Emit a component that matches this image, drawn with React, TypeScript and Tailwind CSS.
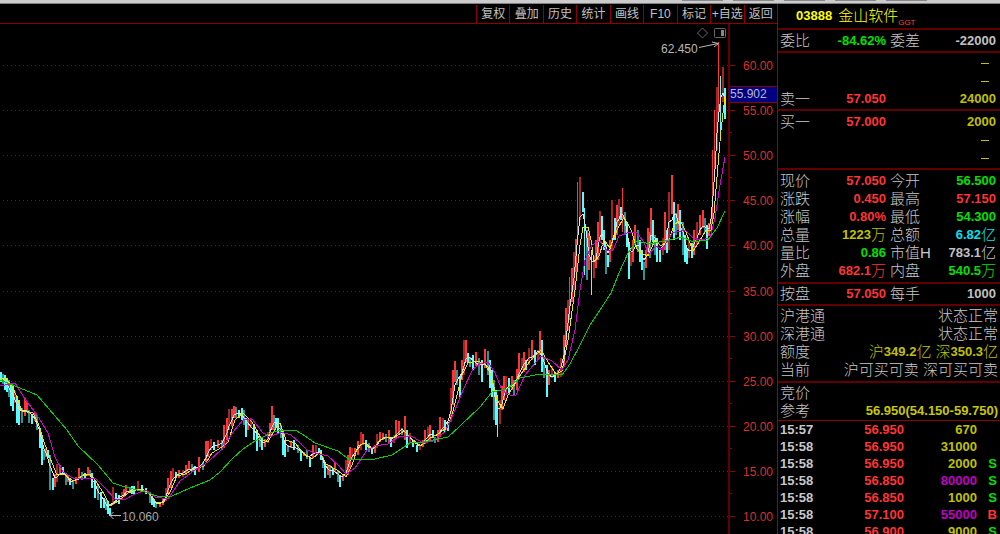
import type { ReactNode } from "react";

const CJK = "font-['Liberation_Sans','Noto_Sans_CJK_SC',sans-serif]";

const tools = ["复权", "叠加", "历史", "统计", "画线", "F10", "标记", "+自选", "返回"];

const RED = "text-[#ff3434]";
const GREEN = "text-[#00e000]";
const YELLOW = "text-[#c0c000]";
const CYAN = "text-[#00e0f0]";
const GRAY = "text-[#c0c0c0]";
const PURPLE = "text-[#c000c0]";

type Quote = { label: string; value: string; unit?: string; color: string };

const quotes: Quote[] = [
  { label: "现价", value: "57.050", color: RED },
  { label: "今开", value: "56.500", color: GREEN },
  { label: "涨跌", value: "0.450", color: RED },
  { label: "最高", value: "57.150", color: RED },
  { label: "涨幅", value: "0.80%", color: RED },
  { label: "最低", value: "54.300", color: GREEN },
  { label: "总量", value: "1223", unit: "万", color: YELLOW },
  { label: "总额", value: "6.82", unit: "亿", color: CYAN },
  { label: "量比", value: "0.86", color: GREEN },
  { label: "市值H", value: "783.1", unit: "亿", color: GRAY },
  { label: "外盘", value: "682.1", unit: "万", color: RED },
  { label: "内盘", value: "540.5", unit: "万", color: GREEN },
];

const trades = [
  { time: "15:57", price: "56.950", volume: "670", side: "" },
  { time: "15:58", price: "56.950", volume: "31000", side: "" },
  { time: "15:58", price: "56.950", volume: "2000", side: "S" },
  { time: "15:58", price: "56.850", volume: "80000", side: "S", big: true },
  { time: "15:58", price: "56.850", volume: "1000", side: "S" },
  { time: "15:58", price: "57.100", volume: "55000", side: "B", big: true },
  { time: "15:58", price: "56.900", volume: "9000", side: "S" },
];

// x, high, low in chart units
const bars: [number, number, number][] = [
  [1, 372, 382], [3, 374, 384], [5, 375, 390], [7, 378, 392], [9, 380, 397], [11, 383, 406], [13, 386, 411], [15, 391, 403],
  [17, 396, 423], [19, 400, 425], [22, 408, 423], [25, 398, 416], [27, 402, 411], [29, 410, 423], [32, 414, 424], [35, 412, 421],
  [37, 415, 430], [40, 428, 448], [42, 435, 465], [44, 450, 460], [46, 448, 457], [48, 450, 458], [50, 455, 490], [53, 478, 490],
  [55, 474, 487], [57, 464, 482], [60, 465, 474], [63, 467, 475], [66, 473, 485], [68, 475, 482], [70, 478, 485], [73, 480, 489],
  [76, 477, 484], [79, 468, 478], [82, 472, 480], [85, 473, 479], [88, 467, 476], [90, 470, 476], [92, 473, 488], [95, 480, 498],
  [98, 485, 500], [101, 492, 508], [104, 498, 508], [106, 499, 510], [108, 501, 514], [110, 508, 516], [113, 487, 505], [116, 493, 501],
  [119, 495, 504], [122, 492, 500], [124, 489, 497], [126, 485, 495], [130, 487, 493], [132, 486, 494], [134, 486, 495], [138, 481, 490],
  [142, 485, 491], [146, 488, 494], [150, 492, 503], [152, 496, 505], [154, 499, 507], [156, 502, 508], [160, 502, 507], [163, 498, 505],
  [166, 488, 501], [168, 478, 493], [171, 471, 488], [173, 468, 480], [176, 472, 478], [179, 470, 478], [183, 470, 477], [186, 465, 475],
  [189, 461, 470], [192, 464, 472], [195, 466, 475], [199, 457, 472], [203, 462, 470], [206, 441, 462], [208, 441, 457], [211, 439, 450],
  [214, 442, 450], [218, 440, 448], [222, 440, 450], [224, 425, 448], [227, 418, 440], [229, 409, 430], [232, 409, 426], [234, 406, 418],
  [236, 407, 418], [239, 410, 418], [242, 408, 420], [244, 410, 425], [246, 418, 437], [248, 420, 430], [251, 418, 428], [254, 424, 440],
  [257, 430, 451], [260, 437, 447], [262, 438, 450], [265, 439, 447], [268, 432, 443], [270, 423, 436], [272, 406, 430], [274, 415, 430],
  [276, 418, 428], [278, 418, 433], [281, 425, 438], [283, 430, 455], [285, 440, 457], [288, 445, 452], [291, 442, 448], [294, 440, 450],
  [298, 445, 453], [301, 450, 461], [304, 452, 456], [307, 450, 459], [310, 458, 467], [313, 445, 458], [316, 445, 453], [319, 448, 453],
  [321, 450, 460], [323, 457, 468], [325, 463, 478], [328, 465, 475], [330, 465, 478], [333, 468, 475], [335, 463, 472], [338, 470, 482],
  [340, 475, 487], [343, 475, 481], [346, 460, 477], [348, 455, 475], [350, 447, 468], [352, 448, 460], [355, 448, 455], [358, 441, 455],
  [361, 432, 450], [363, 434, 445], [366, 440, 450], [369, 443, 452], [372, 448, 454], [375, 445, 453], [377, 434, 448], [380, 432, 442],
  [383, 433, 440], [386, 434, 442], [389, 430, 443], [391, 437, 447], [394, 435, 443], [396, 420, 438], [399, 421, 435], [402, 428, 435],
  [405, 416, 440], [407, 430, 448], [410, 433, 443], [413, 440, 447], [417, 445, 452], [420, 445, 450], [423, 440, 447], [425, 430, 444],
  [428, 427, 440], [430, 425, 440], [433, 430, 438], [435, 437, 443], [438, 430, 442], [440, 417, 437], [443, 418, 430], [445, 420, 432],
  [448, 423, 431], [451, 388, 422], [453, 370, 405], [455, 361, 382], [457, 370, 385], [460, 376, 397], [462, 360, 380], [464, 340, 375],
  [466, 340, 362], [468, 353, 363], [470, 357, 367], [473, 355, 370], [476, 352, 366], [479, 358, 375], [482, 360, 382], [485, 349, 368],
  [488, 351, 375], [490, 360, 388], [492, 370, 397], [494, 380, 420], [496, 390, 425], [498, 395, 437], [500, 400, 424], [502, 386, 410],
  [504, 376, 400], [506, 376, 395], [509, 378, 395], [512, 376, 390], [514, 380, 395], [517, 369, 390], [519, 353, 378], [522, 358, 370],
  [524, 352, 372], [526, 360, 370], [529, 348, 365], [532, 340, 360], [535, 350, 365], [538, 350, 360], [540, 331, 355], [542, 340, 372],
  [544, 358, 378], [547, 365, 397], [549, 370, 385], [552, 366, 378], [555, 372, 382], [558, 370, 378], [561, 358, 377], [564, 335, 365],
  [566, 308, 345], [568, 300, 330], [570, 277, 320], [572, 268, 302], [574, 252, 290], [576, 239, 272], [578, 182, 245], [580, 177, 220],
  [583, 192, 212], [585, 208, 275], [587, 230, 280], [589, 233, 270], [592, 250, 295], [594, 256, 278], [596, 240, 268], [598, 222, 260],
  [600, 211, 240], [602, 216, 240], [604, 230, 250], [606, 245, 274], [608, 255, 267], [610, 240, 262], [612, 200, 250], [615, 218, 240],
  [617, 205, 235], [619, 199, 225], [621, 207, 220], [623, 188, 232], [625, 212, 235], [627, 222, 247], [629, 242, 279], [631, 252, 266],
  [633, 240, 262], [635, 225, 245], [638, 230, 252], [640, 240, 262], [642, 250, 270], [644, 262, 280], [646, 250, 268], [648, 228, 250],
  [650, 232, 258], [651, 208, 240], [653, 220, 242], [655, 235, 255], [657, 238, 262], [660, 250, 262], [663, 238, 255], [665, 212, 250],
  [667, 230, 253], [669, 192, 250], [672, 175, 214], [674, 202, 240], [676, 213, 235], [678, 204, 230], [680, 210, 240], [683, 222, 255],
  [685, 235, 262], [687, 248, 264], [689, 240, 258], [692, 243, 258], [694, 230, 255], [697, 222, 245], [700, 215, 235], [703, 210, 228],
  [705, 218, 232], [707, 225, 249], [709, 223, 236], [711, 218, 232], [713, 150, 222], [715, 110, 180], [717, 87, 150], [719, 42, 120],
  [721, 76, 130], [723, 67, 102], [725, 88, 119],
];

const yellowLine =
  "0,378 6,378 14,390 22,411 33,413 38,423 44,442 50,458 57,475 64,474 73,481 82,476 91,474 97,483 104,494 110,506 118,501 128,493 138,489 148,492 156,502 163,503 170,492 177,476 185,474 192,470 204,466 212,453 222,447 228,442 235,420 243,413 252,422 262,440 268,442 274,431 280,423 286,440 295,443 303,453 312,459 320,452 326,464 337,470 346,477 352,465 358,446 364,443 372,450 380,440 388,437 395,437 404,431 413,440 421,446 430,438 440,433 447,427 452,415 457,395 462,375 468,363 478,361 485,364 491,375 497,400 503,409 508,395 515,384 521,374 530,361 541,350 548,362 556,374 562,371 568,340 575,290 580,245 583,227 588,227 591,240 594,262 599,256 604,240 610,248 617,230 624,217 631,230 637,249 643,254 648,256 655,240 661,246 669,240 674,225 680,220 686,232 693,251 699,242 706,230 711,230 714,213 718,165 721,130 725,97";
const magentaLine =
  "0,386 15,383 25,399 37,415 48,433 55,457 63,472 73,478 95,478 105,488 115,499 124,500 135,494 146,490 155,497 168,499 180,481 195,470 208,462 222,449 233,432 243,420 252,419 263,433 270,437 281,432 291,435 300,443 307,450 315,453 328,456 338,465 346,474 355,468 367,450 375,446 388,444 400,436 413,437 423,443 433,441 445,432 455,410 463,390 473,369 480,364 488,362 495,373 502,390 512,396 516,395 525,375 541,356 552,361 562,370 568,360 575,330 580,290 585,260 592,245 600,241 607,251 613,250 619,236 630,232 637,233 643,241 649,254 656,246 662,250 672,233 685,230 693,238 700,240 710,238 715,218 720,185 725,157";
const greenLine =
  "0,380 10,384 37,395 55,416 67,430 78,446 98,465 113,483 125,487 145,492 160,497 172,496 190,488 210,480 220,472 233,458 243,449 255,441 273,432 284,430 297,431 305,436 315,443 338,451 350,460 375,459 392,455 410,443 423,442 448,437 460,426 480,407 492,392 507,389 520,378 540,374 562,375 570,364 580,345 590,325 600,310 611,293 619,273 628,253 637,241 650,244 664,241 682,237 693,242 708,240 717,228 725,211";

const mid = (i: number) => {
  const b = bars[Math.min(bars.length - 1, Math.max(0, i))];
  return (b[1] + b[2]) / 2;
};

const whiteLine = bars
  .map(([x], i) => `${x},${Math.round((mid(i - 2) + mid(i - 1) + mid(i) + mid(i + 1)) / 4)}`)
  .join(" ");

const levels = [60, 55, 50, 45, 40, 35, 30, 25, 20, 15, 10];
const levelY = (i: number) => Math.round(65 + i * 45.1);

function PriceChart() {
  return (
    <svg viewBox="0 24 777 510" className="block h-auto w-full" role="img" aria-label="金山软件 K线图">
      <g shapeRendering="crispEdges">
        {levels.map((level, i) => (
          <g key={level}>
            <line x1="3" x2="728" y1={levelY(i) + 0.5} y2={levelY(i) + 0.5} stroke="#a00000" strokeDasharray="1 3" />
            <rect x="730" y={levelY(i)} width="5" height="1" fill="#900000" />
            {i < 10 && <rect x="730" y={levelY(i) + 22} width="2" height="1" fill="#900000" />}
          </g>
        ))}
        <rect x="728" y="24" width="2" height="510" fill="#600000" />
        <rect x="730" y="87" width="47" height="16" fill="#000080" />
        <rect x="730" y="86" width="47" height="1" fill="#800000" />
        <rect x="730" y="102" width="47" height="1" fill="#900000" />
      </g>

      {bars.map(([x, high, low], i) => {
        const rising = mid(i) < mid(i - 1);
        const dim = i % 3 === 1;
        const fill = rising ? (dim ? "#a82424" : "#ff3434") : dim ? "#349090" : "#54ffff";
        const width = dim || low - high < 40 ? 2 : 1;
        return <rect key={x} x={x - 1} y={high} width={width} height={low - high} fill={fill} shapeRendering="crispEdges" />;
      })}

      <g fill="none" strokeWidth="1" strokeLinejoin="round" shapeRendering="crispEdges">
        <polyline points={whiteLine} stroke="#e0e0e0" />
        <polyline points={yellowLine} stroke="#e8e800" />
        <polyline points={magentaLine} stroke="#d000d0" />
        <polyline points={greenLine} stroke="#00d000" />
      </g>

      <g className="font-['Liberation_Sans',sans-serif] text-xs">
        {levels.map((level, i) => (
          <text key={level} x="743" y={levelY(i) + 5} fill="#d83030">
            {level.toFixed(2)}
          </text>
        ))}
        <text x="730" y="98" fill="#b8b8d8">55.902</text>
        <text x="661" y="53" fill="#b8b8b8">62.450</text>
        <text x="122" y="521" fill="#a8a8a8">10.060</text>
      </g>

      <g fill="none" stroke="#b8b8b8">
        <path d="M699 47.5L718 43.5M712 42L718.5 43.5L714 47" />
        <path d="M121 515.5H110M113.500 512L110 515.500L113.500 519" />
      </g>
      <g fill="none" stroke="#686868">
        <path d="M702.500 28L707.500 33L702.500 38L697.500 33Z" />
        <rect x="714.5" y="28.500" width="11" height="9" rx="1" />
        <rect x="721" y="30" width="3" height="6" fill="#888" stroke="none" />
      </g>
    </svg>
  );
}

function Section({ className = "", children }: { className?: string; children: ReactNode }) {
  return <section className={`border-b-2 border-[#600000] pl-0.5 pr-1 ${className}`}>{children}</section>;
}

function Label({ children }: { children: ReactNode }) {
  return <span className="text-[15px] font-light text-[#c8c8c8]">{children}</span>;
}

function Pair({ label, value, unit, color }: Quote) {
  return (
    <div className="flex items-center justify-between whitespace-nowrap">
      <dt className="text-[15px] font-light text-[#c8c8c8]">{label}</dt>
      <dd className={`flex items-center text-[13px] font-bold ${color}`}>
        {value}
        {unit && <span className="text-[15px] font-light">{unit}</span>}
      </dd>
    </div>
  );
}

function Level({ label, price, volume }: { label?: string; price?: string; volume: string }) {
  return (
    <div className="grid h-[18px] grid-cols-2 items-center gap-1 text-[13px] font-bold">
      <div className="flex items-center justify-between">
        <Label>{label}</Label>
        <span className={RED}>{price}</span>
      </div>
      <span className={`text-right ${YELLOW}`}>{volume}</span>
    </div>
  );
}

function Empty() {
  return (
    <div className="flex h-[18px] items-center justify-end pr-[7px]" aria-label="无挂单">
      <span className="h-px w-2 bg-[#c0c000]" />
    </div>
  );
}

function Row({ label, children }: { label: string; children?: ReactNode }) {
  return (
    <div className="-mr-0.5 flex h-[18px] items-center justify-between whitespace-nowrap">
      <Label>{label}</Label>
      {children}
    </div>
  );
}

function QuotePanel() {
  return (
    <aside className="w-[223px] shrink-0 overflow-hidden border-l border-[#a00000] leading-[18px]">
      <Section className="flex h-[26px] items-center">
        <h1 className="flex items-center gap-1.5 pl-4 text-[#ffff00]">
          <span className="text-[13px] font-bold">03888</span>
          <span className="text-[15px] font-light">金山软件</span>
        </h1>
        <span className="self-end text-[8px] leading-[10px] text-[#ff4040]">GGT</span>
      </Section>

      <Section className="h-[23px] py-0.5">
        <dl className="grid grid-cols-2 gap-1">
          <Pair label="委比" value="-84.62%" color={GREEN} />
          <Pair label="委差" value="-22000" color={GRAY} />
        </dl>
      </Section>

      <Section className="py-px">
        <Empty />
        <Empty />
        <Level label="卖一" price="57.050" volume="24000" />
      </Section>

      <Section className="pb-px pt-0.5">
        <Level label="买一" price="57.000" volume="2000" />
        <Empty />
        <Empty />
      </Section>

      <Section className="py-0.5">
        <dl className="grid auto-rows-[18px] grid-cols-2 gap-x-1">
          {quotes.map((quote) => (
            <Pair key={quote.label} {...quote} />
          ))}
        </dl>
      </Section>

      <Section className="py-px">
        <dl className="grid grid-cols-2 gap-1">
          <Pair label="按盘" value="57.050" color={RED} />
          <Pair label="每手" value="1000" color={GRAY} />
        </dl>
      </Section>

      <Section className="pb-0.5 pt-px">
        <Row label="沪港通">
          <Label>状态正常</Label>
        </Row>
        <Row label="深港通">
          <Label>状态正常</Label>
        </Row>
        <Row label="额度">
          <span className="flex items-center text-[15px] font-light text-[#c0c000]">
            沪<span className="text-[13px] font-bold">349.2</span>亿
            <span className="pl-1">深</span>
            <span className="text-[13px] font-bold">350.3</span>亿
          </span>
        </Row>
        <Row label="当前">
          <Label>沪可买可卖 深可买可卖</Label>
        </Row>
      </Section>

      <section className="border-b border-[#900000] pl-0.5 pr-1 pt-px">
        <Row label="竞价" />
        <Row label="参考">
          <span className="text-[13px] font-bold text-[#c8c800]">56.950(54.150-59.750)</span>
        </Row>
      </section>

      <table className="w-full table-fixed text-right text-[13px] font-bold leading-[17px]">
        <tbody>
          {trades.map((trade, i) => (
            <tr key={i}>
              <td className="w-[50px] pl-0.5 text-left text-[#c8c8c8]">{trade.time}</td>
              <td className={RED}>{trade.price}</td>
              <td className={`w-[73px] ${trade.big ? PURPLE : YELLOW}`}>{trade.volume}</td>
              <td className={`w-[23px] pr-[3px] ${trade.side === "B" ? RED : GREEN}`}>{trade.side}</td>
            </tr>
          ))}
        </tbody>
      </table>
    </aside>
  );
}

export default function App() {
  return (
    <div className={`flex h-screen flex-col overflow-hidden bg-black ${CJK}`}>
      <div className="flex h-1 shrink-0 items-start justify-end gap-2.5 border-b border-[#808080] bg-[#cccccc] pr-[73px]">
        <span className="h-px w-[41px] bg-[#888888]" />
        <span className="h-px w-[41px] bg-[#888888]" />
        <span className="h-px w-[41px] bg-[#888888]" />
        <span className="h-px w-[41px] bg-[#888888]" />
        <span className="h-px w-[41px] bg-[#888888]" />
      </div>
      <div className="flex min-h-0 flex-1">
        <main className="min-w-0 flex-1">
          <nav className="flex h-5 justify-end border-b border-[#900000] pt-px">
            <div className="grid w-[301px] grid-cols-9">
              {tools.map((tool) => (
                <button key={tool} type="button" className="whitespace-nowrap border-l border-[#900000] text-center text-xs leading-[18px] text-[#c0c0c0]">
                  {tool}
                </button>
              ))}
            </div>
          </nav>
          <PriceChart />
        </main>
        <QuotePanel />
      </div>
    </div>
  );
}
